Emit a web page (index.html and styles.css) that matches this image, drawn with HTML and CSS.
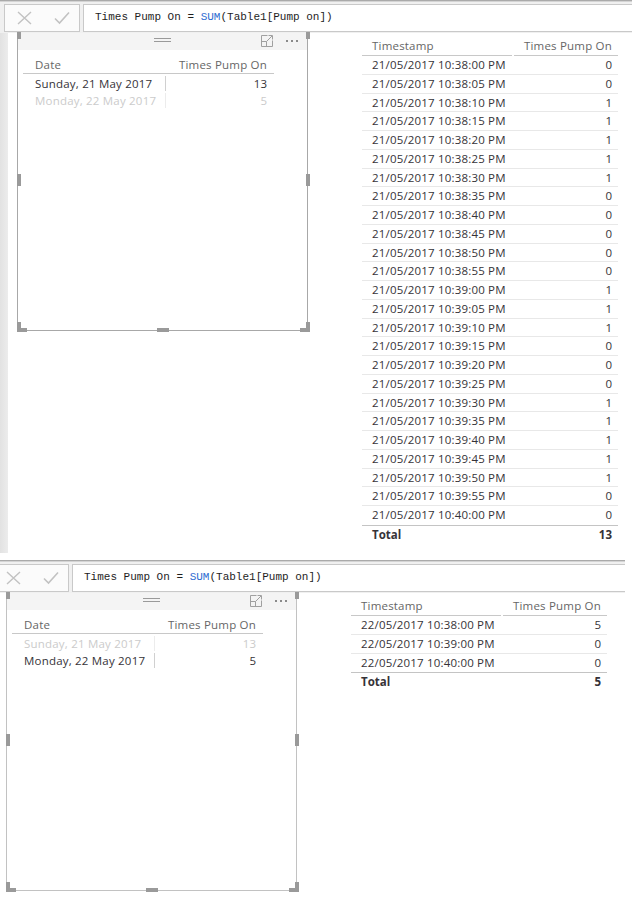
FILE: index.html
```html
<!DOCTYPE html>
<html>
<head>
<meta charset="utf-8">
<link rel="stylesheet" href="styles.css">
</head>
<body>
<div class="page">
  <section class="shot shot-top">
    <div class="fbar">
      <div class="btns">
        <svg class="ic-x" width="15" height="14" viewBox="0 0 15 14"><path d="M1 1L14 13M14 1L1 13" stroke="#c2c2c2" stroke-width="1.4" fill="none"/></svg>
        <svg class="ic-ok" width="16" height="14" viewBox="0 0 16 14"><path d="M1 7.5L5.5 12L15 1.5" stroke="#c2c2c2" stroke-width="1.6" fill="none"/></svg>
      </div>
      <div class="formula">Times Pump On = <span class="fn">SUM</span>(Table1[Pump on])</div>
    </div>
    <div class="body">
      <div class="strip"></div>
      <div class="visual">
        <div class="vhead">
          <svg class="drag" width="17" height="5" viewBox="0 0 17 5"><path d="M0 0.5H17M0 3.5H17" stroke="#9a9a9a"/></svg>
          <svg class="focus" width="12" height="12" viewBox="0 0 12 12"><path d="M6.5 0.5H0.5V11.5H11.5V5.5M0.5 6.5H5.5V11.5M5.5 6.5L11 1M7.5 0.5H11.5V4.5" stroke="#a0a0a0" fill="none"/></svg>
          <svg class="dots" width="13" height="2" viewBox="0 0 13 2"><rect x="0" y="0" width="2" height="2" fill="#8a8a8a"/><rect x="5" y="0" width="2" height="2" fill="#8a8a8a"/><rect x="10" y="0" width="2" height="2" fill="#8a8a8a"/></svg>
        </div>
        <div class="slicer">
          <div class="s-head"><span class="c1 lbl">Date</span><span class="c2 lbl">Times Pump On</span></div>
          <div class="s-row"><span class="c1 lbl">Sunday, 21 May 2017</span><span class="c2">13</span></div>
          <div class="s-row dim"><span class="c1 lbl">Monday, 22 May 2017</span><span class="c2">5</span></div>
        </div>
        <span class="h h-tl"></span><span class="h h-ml"></span><span class="h h-blv"></span><span class="h h-blh"></span>
        <span class="h h-bm"></span><span class="h h-brv"></span><span class="h h-brh"></span><span class="h h-mr"></span><span class="h h-tr"></span>
      </div>
      <div class="grid">
        <div class="g-head"><span class="c1 lbl">Timestamp</span><span class="c2 lbl">Times Pump On</span></div>
        <div class="g-row"><span class="c1 ts">21/05/2017 10:38:00 PM</span><span class="c2">0</span></div>
        <div class="g-row"><span class="c1 ts">21/05/2017 10:38:05 PM</span><span class="c2">0</span></div>
        <div class="g-row"><span class="c1 ts">21/05/2017 10:38:10 PM</span><span class="c2">1</span></div>
        <div class="g-row"><span class="c1 ts">21/05/2017 10:38:15 PM</span><span class="c2">1</span></div>
        <div class="g-row"><span class="c1 ts">21/05/2017 10:38:20 PM</span><span class="c2">1</span></div>
        <div class="g-row"><span class="c1 ts">21/05/2017 10:38:25 PM</span><span class="c2">1</span></div>
        <div class="g-row"><span class="c1 ts">21/05/2017 10:38:30 PM</span><span class="c2">1</span></div>
        <div class="g-row"><span class="c1 ts">21/05/2017 10:38:35 PM</span><span class="c2">0</span></div>
        <div class="g-row"><span class="c1 ts">21/05/2017 10:38:40 PM</span><span class="c2">0</span></div>
        <div class="g-row"><span class="c1 ts">21/05/2017 10:38:45 PM</span><span class="c2">0</span></div>
        <div class="g-row"><span class="c1 ts">21/05/2017 10:38:50 PM</span><span class="c2">0</span></div>
        <div class="g-row"><span class="c1 ts">21/05/2017 10:38:55 PM</span><span class="c2">0</span></div>
        <div class="g-row"><span class="c1 ts">21/05/2017 10:39:00 PM</span><span class="c2">1</span></div>
        <div class="g-row"><span class="c1 ts">21/05/2017 10:39:05 PM</span><span class="c2">1</span></div>
        <div class="g-row"><span class="c1 ts">21/05/2017 10:39:10 PM</span><span class="c2">1</span></div>
        <div class="g-row"><span class="c1 ts">21/05/2017 10:39:15 PM</span><span class="c2">0</span></div>
        <div class="g-row"><span class="c1 ts">21/05/2017 10:39:20 PM</span><span class="c2">0</span></div>
        <div class="g-row"><span class="c1 ts">21/05/2017 10:39:25 PM</span><span class="c2">0</span></div>
        <div class="g-row"><span class="c1 ts">21/05/2017 10:39:30 PM</span><span class="c2">1</span></div>
        <div class="g-row"><span class="c1 ts">21/05/2017 10:39:35 PM</span><span class="c2">1</span></div>
        <div class="g-row"><span class="c1 ts">21/05/2017 10:39:40 PM</span><span class="c2">1</span></div>
        <div class="g-row"><span class="c1 ts">21/05/2017 10:39:45 PM</span><span class="c2">1</span></div>
        <div class="g-row"><span class="c1 ts">21/05/2017 10:39:50 PM</span><span class="c2">1</span></div>
        <div class="g-row"><span class="c1 ts">21/05/2017 10:39:55 PM</span><span class="c2">0</span></div>
        <div class="g-row"><span class="c1 ts">21/05/2017 10:40:00 PM</span><span class="c2">0</span></div>
        <div class="g-total"><span class="c1">Total</span><span class="c2">13</span></div>
      </div>
    </div>
  </section>

  <section class="shot shot-bottom">
    <div class="fbar">
      <div class="btns">
        <svg class="ic-x" width="15" height="14" viewBox="0 0 15 14"><path d="M1 1L14 13M14 1L1 13" stroke="#c2c2c2" stroke-width="1.4" fill="none"/></svg>
        <svg class="ic-ok" width="16" height="14" viewBox="0 0 16 14"><path d="M1 7.5L5.5 12L15 1.5" stroke="#c2c2c2" stroke-width="1.6" fill="none"/></svg>
      </div>
      <div class="formula">Times Pump On = <span class="fn">SUM</span>(Table1[Pump on])</div>
    </div>
    <div class="body">
      <div class="strip"></div>
      <div class="visual">
        <div class="vhead">
          <svg class="drag" width="17" height="5" viewBox="0 0 17 5"><path d="M0 0.5H17M0 3.5H17" stroke="#9a9a9a"/></svg>
          <svg class="focus" width="12" height="12" viewBox="0 0 12 12"><path d="M6.5 0.5H0.5V11.5H11.5V5.5M0.5 6.5H5.5V11.5M5.5 6.5L11 1M7.5 0.5H11.5V4.5" stroke="#a0a0a0" fill="none"/></svg>
          <svg class="dots" width="13" height="2" viewBox="0 0 13 2"><rect x="0" y="0" width="2" height="2" fill="#8a8a8a"/><rect x="5" y="0" width="2" height="2" fill="#8a8a8a"/><rect x="10" y="0" width="2" height="2" fill="#8a8a8a"/></svg>
        </div>
        <div class="slicer">
          <div class="s-head"><span class="c1 lbl">Date</span><span class="c2 lbl">Times Pump On</span></div>
          <div class="s-row dim"><span class="c1 lbl">Sunday, 21 May 2017</span><span class="c2">13</span></div>
          <div class="s-row"><span class="c1 lbl">Monday, 22 May 2017</span><span class="c2">5</span></div>
        </div>
        <span class="h h-tl"></span><span class="h h-ml"></span><span class="h h-blv"></span><span class="h h-blh"></span>
        <span class="h h-bm"></span><span class="h h-brv"></span><span class="h h-brh"></span><span class="h h-mr"></span><span class="h h-tr"></span>
      </div>
      <div class="grid">
        <div class="g-head"><span class="c1 lbl">Timestamp</span><span class="c2 lbl">Times Pump On</span></div>
        <div class="g-row"><span class="c1 ts">22/05/2017 10:38:00 PM</span><span class="c2">5</span></div>
        <div class="g-row"><span class="c1 ts">22/05/2017 10:39:00 PM</span><span class="c2">0</span></div>
        <div class="g-row"><span class="c1 ts">22/05/2017 10:40:00 PM</span><span class="c2">0</span></div>
        <div class="g-total"><span class="c1">Total</span><span class="c2">5</span></div>
      </div>
    </div>
  </section>
</div>
</body>
</html>
```

FILE: styles.css
```css
html, body {
  margin: 0;
  padding: 0;
  background: #ffffff;
}

.page {
  width: 640px;
  height: 904px;
  overflow: hidden;
  font-family: "Open Sans", "Noto Sans", sans-serif;
  font-size: 11.5px;
  color: #363338;
}

.shot {
  position: relative;
  overflow: hidden;
  background: #ffffff;
}

.shot-top {
  width: 632px;
  height: 553px;
}

.shot-bottom {
  width: 636px;
  height: 344px;
  margin: 7px 0 0 -11px;
}

/* formula bar */
.fbar {
  display: flex;
  height: 33px;
  box-sizing: border-box;
  padding: 3px 0 0 4px;
  gap: 3px;
  background: #f0f0f0;
  border-top: 1px solid #aaaaaa;
  box-shadow: inset 0 1px 0 #d4d4d4;
}

.btns {
  width: 76px;
  height: 28px;
  box-sizing: border-box;
  border: 1px solid #c9c9c9;
  background: #fbfbfb;
  display: flex;
  align-items: center;
  padding-left: 12px;
  gap: 22px;
}

.formula {
  flex: 1;
  height: 28px;
  margin-right: -4px;
  box-sizing: border-box;
  border: 1px solid #c9c9c9;
  background: #ffffff;
  padding: 0 0 2px 11px;
  font-family: "Liberation Mono", "DejaVu Sans Mono", monospace;
  font-size: 11px;
  line-height: 24px;
  color: #1e1e1e;
  white-space: nowrap;
}

.fn {
  color: #2e6bd1;
}

/* body */
.body {
  display: flex;
  align-items: flex-start;
  height: 520px;
}

.strip {
  width: 8px;
  align-self: stretch;
  background: linear-gradient(to right, #e2e2e2, #ececec);
}

.shot-bottom .strip {
  background: #ffffff;
}

/* visual container */
.visual {
  position: relative;
  width: 291px;
  height: 298px;
  box-sizing: border-box;
  margin-left: 9px;
  border: 1px solid #a8a8a8;
  border-top: 0;
}

.shot-bottom .visual {
  border-color: #c2c2c2;
}

.vhead {
  display: flex;
  align-items: flex-start;
  height: 17px;
  box-sizing: border-box;
  padding: 2px 8px 0 0;
  background: #f4f4f4;
}

.drag {
  display: block;
  margin: 3px 0 0 136px;
}

.focus {
  display: block;
  margin-left: auto;
}

.dots {
  display: block;
  margin: 5px 0 0 13px;
}

/* resize handles */
.h {
  position: absolute;
  background: #9a9a9a;
}
.h-tl { left: -1px; top: -1px; width: 4px; height: 7px; }
.h-tr { left: 288px; top: -1px; width: 4px; height: 7px; }
.h-ml { left: -1px; top: 141px; width: 4px; height: 12px; }
.h-mr { left: 288px; top: 141px; width: 4px; height: 12px; }
.h-blv { left: -1px; top: 289px; width: 4px; height: 10px; }
.h-blh { left: -1px; top: 295px; width: 10px; height: 4px; }
.h-brv { left: 288px; top: 289px; width: 4px; height: 10px; }
.h-brh { left: 282px; top: 295px; width: 10px; height: 4px; }
.h-bm { left: 139px; top: 295px; width: 12px; height: 4px; }

/* slicer-like table inside visual */
.slicer {
  width: 251px;
  margin: 7px 0 0 5px;
}

.s-head,
.s-row {
  display: grid;
  grid-template-columns: 143px 108px;
  white-space: nowrap;
}

.s-head {
  height: 17px;
  box-sizing: border-box;
  border-bottom: 1px solid #c8c8c8;
  line-height: 16px;
  color: #666666;
}

.s-row {
  height: 17px;
  box-sizing: border-box;
  padding-top: 2px;
  line-height: 15px;
}

.s-row .c1 {
  border-right: 1px solid #d0d0d0;
}

.s-row.dim {
  color: #cbcbcb;
}

.s-row.dim .c1 {
  border-right-color: #ececec;
}

.slicer .c1 {
  padding-left: 12px;
}

.slicer .c2 {
  text-align: right;
  padding-right: 7px;
}

/* right table */
.grid {
  width: 256px;
  margin: 4px 0 0 54px;
}

.g-head,
.g-row,
.g-total {
  display: grid;
  grid-template-columns: 152px 104px;
  white-space: nowrap;
}

.g-head {
  height: 19px;
  color: #666666;
}

.g-head .c1,
.g-head .c2 {
  border-bottom: 1px solid #c8c8c8;
  line-height: 18px;
}

.g-head .c1 {
  margin-right: 2px;
}

.g-row {
  height: 18.75px;
  box-sizing: border-box;
  border-bottom: 1px solid #e8e8e8;
  line-height: 18px;
}

.g-row:nth-last-child(2) {
  border-bottom-color: transparent;
}

.g-total {
  height: 19px;
  border-top: 1px solid #c4c4c4;
  font-weight: 700;
  line-height: 18px;
}

.grid .c1 {
  padding-left: 10px;
}

.grid .c2 {
  text-align: right;
  padding-right: 6px;
}

.ts {
  letter-spacing: 0.18px;
}

.lbl {
  letter-spacing: 0.2px;
}
```
